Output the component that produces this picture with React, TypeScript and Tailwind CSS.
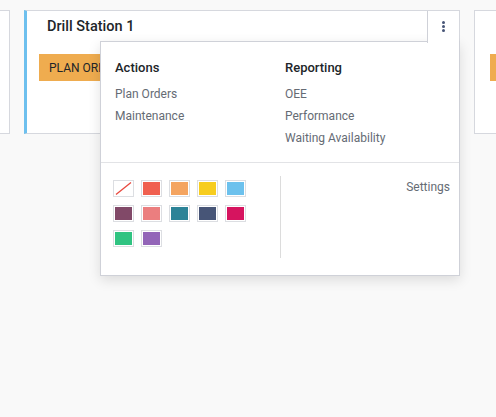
import React from "react";

const SWATCHES = [
  null,
  "#f06050",
  "#f4a460",
  "#f7cd1f",
  "#6cc1ed",
  "#814968",
  "#eb7e7f",
  "#2c8397",
  "#475577",
  "#d6145f",
  "#30c381",
  "#9365b8",
];

function Swatch({ color }: { color: string | null }) {
  return (
    <div className="w-[21px] h-[17px] border border-[#dcdee2] p-[1px] bg-white">
      {color ? (
        <div className="w-full h-full" style={{ backgroundColor: color }} />
      ) : (
        <svg viewBox="0 0 17 13" className="w-full h-full block">
          <line x1="1" y1="12.5" x2="16" y2="0.5" stroke="#e8483e" strokeWidth="1.3" />
        </svg>
      )}
    </div>
  );
}

function Dropdown() {
  return (
    <div className="absolute left-[73px] top-[30px] w-[360px] bg-white border border-[#cfd1d8] shadow-[0_4px_12px_rgba(0,0,0,0.12)] z-10">
      <div className="flex pl-[14px] pt-[16px] pb-[13px]">
        <div className="w-[170px]">
          <div className="text-[13px] leading-[20px] font-medium text-[#212529]">Actions</div>
          <div className="mt-[5px] text-[12px] leading-[22px] text-[#656b74]">
            <div>Plan Orders</div>
            <div>Maintenance</div>
          </div>
        </div>
        <div>
          <div className="text-[13px] leading-[20px] font-medium text-[#212529]">Reporting</div>
          <div className="mt-[5px] text-[12px] leading-[22px] text-[#656b74]">
            <div>OEE</div>
            <div>Performance</div>
            <div>Waiting Availability</div>
          </div>
        </div>
      </div>
      <div className="border-t border-[#e2e3e6]" />
      <div className="flex pt-[13px] pb-[17px]">
        <div className="w-[179px] pl-[12px] pt-[4px]">
          <div className="grid grid-cols-[repeat(5,21px)] gap-x-[7px] gap-y-[8px]">
            {SWATCHES.map((c, i) => (
              <Swatch key={i} color={c} />
            ))}
          </div>
        </div>
        <div className="flex-1 border-l border-[#dcdcdc] h-[82px] flex justify-end pr-[9px]">
          <div className="pt-[1px] text-[12px] leading-[20px] text-[#656b74]">Settings</div>
        </div>
      </div>
    </div>
  );
}

export default function App() {
  return (
    <div
      className="w-[496px] h-[417px] bg-[#f9f9f9] overflow-hidden pt-[10px]"
      style={{ fontFamily: "Roboto, 'Noto Sans', sans-serif" }}
    >
      <div className="flex gap-[14px] -ml-[427px]">
        {/* card cut off on the left */}
        <div className="shrink-0 w-[437px] h-[124px] bg-white border border-[#d6d8de]" />

        {/* main card */}
        <div className="shrink-0 relative w-[436px] h-[124px] bg-white border border-[#d6d8de] border-l-[3px] border-l-[#6ec0ee]">
          <div className="flex h-[31px]">
            <div className="flex-1 flex items-center pl-[20px] text-[14.5px] font-medium text-[#212529]">
              Drill Station 1
            </div>
            <div className="w-[32px] flex justify-center pt-[10px] border-l border-[#cfd1d8] relative z-20 bg-white h-[32px]">
              <div className="flex flex-col gap-[1.5px]">
                <span className="block w-[2.5px] h-[2.5px] bg-[#475577] rounded-full" />
                <span className="block w-[2.5px] h-[2.5px] bg-[#475577] rounded-full" />
                <span className="block w-[2.5px] h-[2.5px] bg-[#475577] rounded-full" />
              </div>
            </div>
          </div>
          <div className="pl-[12px] pt-[12px]">
            <div className="inline-flex items-center h-[27px] px-[10px] bg-[#efac4f] text-[12px] text-[#212529] uppercase">
              Plan Orders
            </div>
          </div>
          <Dropdown />
        </div>

        {/* card on the right */}
        <div className="shrink-0 w-[436px] h-[124px] bg-white border border-[#d6d8de]">
          <div className="h-[31px]" />
          <div className="pl-[15px] pt-[12px]">
            <div className="inline-flex items-center h-[27px] px-[10px] bg-[#efac4f] text-[12px] text-[#212529] uppercase">
              Plan Orders
            </div>
          </div>
        </div>
      </div>
    </div>
  );
}
